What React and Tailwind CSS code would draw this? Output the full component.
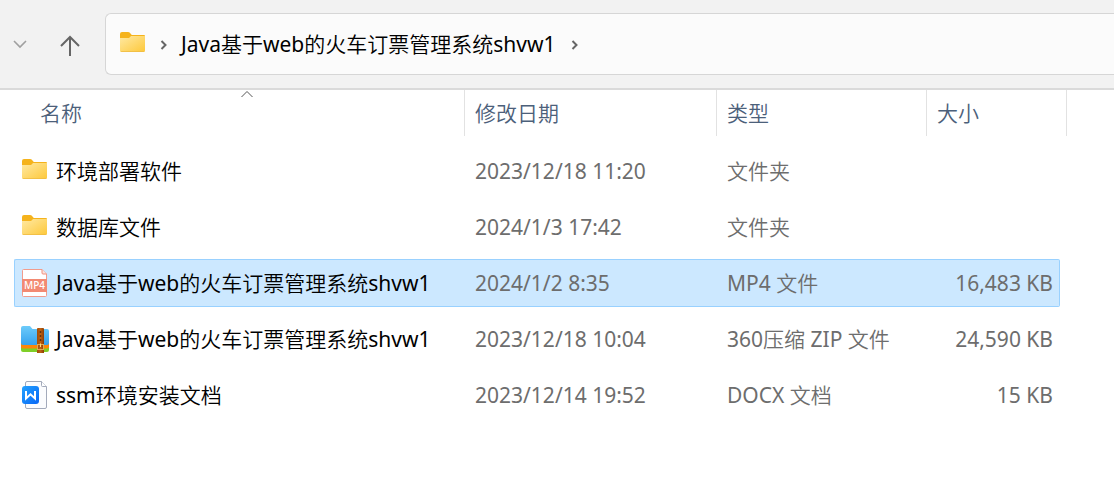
import React from "react";

const files = [
  { name: "环境部署软件", date: "2023/12/18 11:20", type: "文件夹", size: "", icon: "folder" },
  { name: "数据库文件", date: "2024/1/3 17:42", type: "文件夹", size: "", icon: "folder" },
  { name: "Java基于web的火车订票管理系统shvw1", date: "2024/1/2 8:35", type: "MP4 文件", size: "16,483 KB", icon: "mp4", selected: true },
  { name: "Java基于web的火车订票管理系统shvw1", date: "2023/12/18 10:04", type: "360压缩 ZIP 文件", size: "24,590 KB", icon: "zip" },
  { name: "ssm环境安装文档", date: "2023/12/14 19:52", type: "DOCX 文档", size: "15 KB", icon: "docx" },
];

function FolderIcon() {
  return (
    <svg className="h-7 w-7 shrink-0" viewBox="0 1 28 28" aria-hidden="true">
      <defs>
        <linearGradient id="folderFront" x1="0" y1="0" x2="1" y2="1">
          <stop offset="0" stopColor="#ffe9a3" />
          <stop offset="1" stopColor="#fdc83a" />
        </linearGradient>
      </defs>
      <path d="M1 5a2 2 0 0 1 2-2h6.200c.6 0 1 .2 1.400.6L12.800 6H25a1 1 0 0 1 1 1v5H1z" fill="#f5b31c" />
      <path d="M1 9h8.200c.6 0 1-.2 1.400-.6L12 7H26v14.500a1.500 1.500 0 0 1-1.500 1.500h-22A1.500 1.500 0 0 1 1 21.500z" fill="url(#folderFront)" />
      <path d="M1.500 22.300c.3.4.6.6 1 .6h22c.5 0 .8-.2 1-.6z" fill="#eebb42" />
    </svg>
  );
}

function Mp4Icon() {
  return (
    <svg className="h-7 w-7 shrink-0" viewBox="0 1 28 28" aria-hidden="true">
      <path d="M1.500 2.500a1 1 0 0 1 1-1H21L25.500 6v21.500a1 1 0 0 1-1 1h-22a1 1 0 0 1-1-1z" fill="#fff" stroke="#f29c8c" />
      <path d="M21 1.500V5a1 1 0 0 0 1 1h3.500" fill="#fbe3de" stroke="#f08d7b" />
      <path d="M1 11h25v13H1z" fill="#f28a73" />
      <text x="13.500" y="21" textAnchor="middle" fill="#fff" fontFamily="Noto Sans, sans-serif" fontSize="10" fontWeight="500">MP4</text>
    </svg>
  );
}

function ZipIcon() {
  return (
    <svg className="h-7 w-7 shrink-0" viewBox="0 0 28 28" aria-hidden="true">
      <defs>
        <linearGradient id="zipBlue" x1="0" y1="0" x2="0" y2="1">
          <stop offset="0" stopColor="#6dcbfa" />
          <stop offset="1" stopColor="#35a2ee" />
        </linearGradient>
        <linearGradient id="zipBelt" x1="0" y1="0" x2="1" y2="0">
          <stop offset="0" stopColor="#a34c08" />
          <stop offset=".5" stopColor="#bd6212" />
          <stop offset="1" stopColor="#8c3c04" />
        </linearGradient>
      </defs>
      <path d="M0 20h28v5a2 2 0 0 1-2 2H2a2 2 0 0 1-2-2z" fill="#7fcf28" />
      <path d="M0 18h28v3.500a2 2 0 0 1-2 2H2a2 2 0 0 1-2-2z" fill="#fb8709" />
      <path d="M0 3a2 2 0 0 1 2-2h6c1 0 1.500.4 2 1.200L11.500 4H26a2 2 0 0 1 2 2v12a2 2 0 0 1-2 2H2a2 2 0 0 1-2-2z" fill="url(#zipBlue)" />
      <path d="M16 4q0-1 1-1h5q1 0 1 1v24h-7z" fill="url(#zipBelt)" />
      <path d="M19.500 6v2M19.500 10v2M19.500 14v2" stroke="#61330f" strokeWidth="1.500" />
      <rect x="16.500" y="19.500" width="6" height="5" fill="none" stroke="#e0a850" />
      <path d="M19.500 18.500V22" stroke="#ffdc82" />
    </svg>
  );
}

function DocxIcon() {
  return (
    <svg className="h-7 w-7 shrink-0" viewBox="0 1 28 28" aria-hidden="true">
      <defs>
        <linearGradient id="docBlue" x1="0" y1="0" x2="1" y2="1">
          <stop offset="0" stopColor="#23a2ff" />
          <stop offset="1" stopColor="#0866f5" />
        </linearGradient>
      </defs>
      <path d="M4.500 3a1.500 1.500 0 0 1 1.500-1.500h14.500l5 5V27a1.500 1.500 0 0 1-1.500 1.500H6A1.500 1.500 0 0 1 4.500 27z" fill="#fbfcfe" stroke="#a3aabb" />
      <path d="M20.500 1.500v4a1 1 0 0 0 1 1h4" fill="#fff" stroke="#a3aabb" />
      <rect x="1" y="6" width="17" height="18" rx="3" fill="url(#docBlue)" />
      <path d="M5 11v7.500l4.500-4.200 4.500 4.200V11" fill="none" stroke="#fff" strokeWidth="2" />
    </svg>
  );
}

const icons = { folder: FolderIcon, mp4: Mp4Icon, zip: ZipIcon, docx: DocxIcon };

function Chevron() {
  return (
    <svg className="h-3 w-2 shrink-0" viewBox="0 0 8 12" fill="none" stroke="#666" strokeWidth="2" aria-hidden="true">
      <path d="M1.500 3l4 4-4 4" />
    </svg>
  );
}

function HeaderCell({ label, colSpan }) {
  return (
    <th scope="col" colSpan={colSpan} className="p-0 align-top font-normal">
      <button type="button" className="flex h-[46px] w-full items-center border-r border-[#e2e2e2] pl-2.5">
        {label}
      </button>
    </th>
  );
}

function Cell({ selected, edge = "", children }) {
  return (
    <td className="px-0 py-1">
      <div className={`flex h-12 items-center whitespace-nowrap border-y ${edge} ${selected ? "border-[#99d1ff] bg-[#cce8ff]" : "border-transparent"}`}>
        {children}
      </div>
    </td>
  );
}

export default function App() {
  return (
    <div className="min-h-screen overflow-hidden bg-white font-['Noto_Sans','Noto_Sans_CJK_SC_DemiLight','Noto_Sans_CJK_SC_Light','Noto_Sans_CJK_SC',sans-serif] text-[21px] leading-7 font-normal text-black">
      <header className="flex items-center border-b-2 border-[#dadada] bg-[#f2f2f2] py-[13px]">
        <button type="button" aria-label="最近的位置" className="flex w-10 justify-center">
          <svg className="h-4 w-4" viewBox="0 0 16 16" fill="none" stroke="#a0a0a0" strokeWidth="1.600" aria-hidden="true">
            <path d="M2 5l6 6 6-6" />
          </svg>
        </button>
        <button type="button" aria-label="上移" className="flex w-[65px] pl-[18px]">
          <svg className="h-6 w-6" viewBox="0 0 24 24" fill="none" stroke="#666" strokeWidth="2" aria-hidden="true">
            <path d="M12 24V5M3 14l9-9 9 9" />
          </svg>
        </button>
        <nav aria-label="地址" className="flex h-[62px] min-w-0 flex-1 items-center rounded-l-md border border-r-0 border-[#d6d6d6] bg-[#fbfbfb] pl-[13px]">
          <FolderIcon />
          <span className="flex w-[34px] justify-center"><Chevron /></span>
          <a href="#folder" className="whitespace-nowrap">Java基于web的火车订票管理系统shvw1</a>
          <span className="flex w-10 justify-center"><Chevron /></span>
        </nav>
      </header>

      <main className="pr-[47px] pl-3.5">
        <table className="w-full min-w-[1040px] table-fixed border-separate border-spacing-0 text-left">
          <colgroup>
            <col />
            <col className="w-[252px]" />
            <col className="w-[210px]" />
            <col className="w-[133px]" />
            <col className="w-[7px]" />
          </colgroup>
          <thead>
            <tr className="h-[53px] text-[#4c607a]">
              <th scope="col" aria-sort="ascending" className="p-0 align-top font-normal">
                <div className="pl-4">
                  <button type="button" className="relative flex h-[46px] w-full items-center border-r border-[#e2e2e2] pl-2.5">
                    名称
                    <svg className="absolute top-0 left-1/2 h-2 w-3 -translate-x-1/2" viewBox="0 0 12 8" fill="none" stroke="#555" aria-hidden="true">
                      <path d="M.5 7L6 1.500 11.500 7" />
                    </svg>
                  </button>
                </div>
              </th>
              <HeaderCell label="修改日期" />
              <HeaderCell label="类型" />
              <HeaderCell label="大小" colSpan={2} />
            </tr>
          </thead>
          <tbody className="text-[#6d6d6d]">
            {files.map((file) => {
              const Icon = icons[file.icon];
              return (
                <tr key={file.date} aria-selected={Boolean(file.selected)}>
                  <Cell selected={file.selected} edge="rounded-l-xs border-l pl-1.5">
                    <Icon />
                    <span className="pl-[7px] text-black">{file.name}</span>
                  </Cell>
                  <Cell selected={file.selected} edge="pl-2.5">{file.date}</Cell>
                  <Cell selected={file.selected} edge="pl-2.5">{file.type}</Cell>
                  <Cell selected={file.selected} edge="justify-end rounded-r-xs border-r pr-1.5">{file.size}</Cell>
                </tr>
              );
            })}
          </tbody>
        </table>
      </main>
    </div>
  );
}
